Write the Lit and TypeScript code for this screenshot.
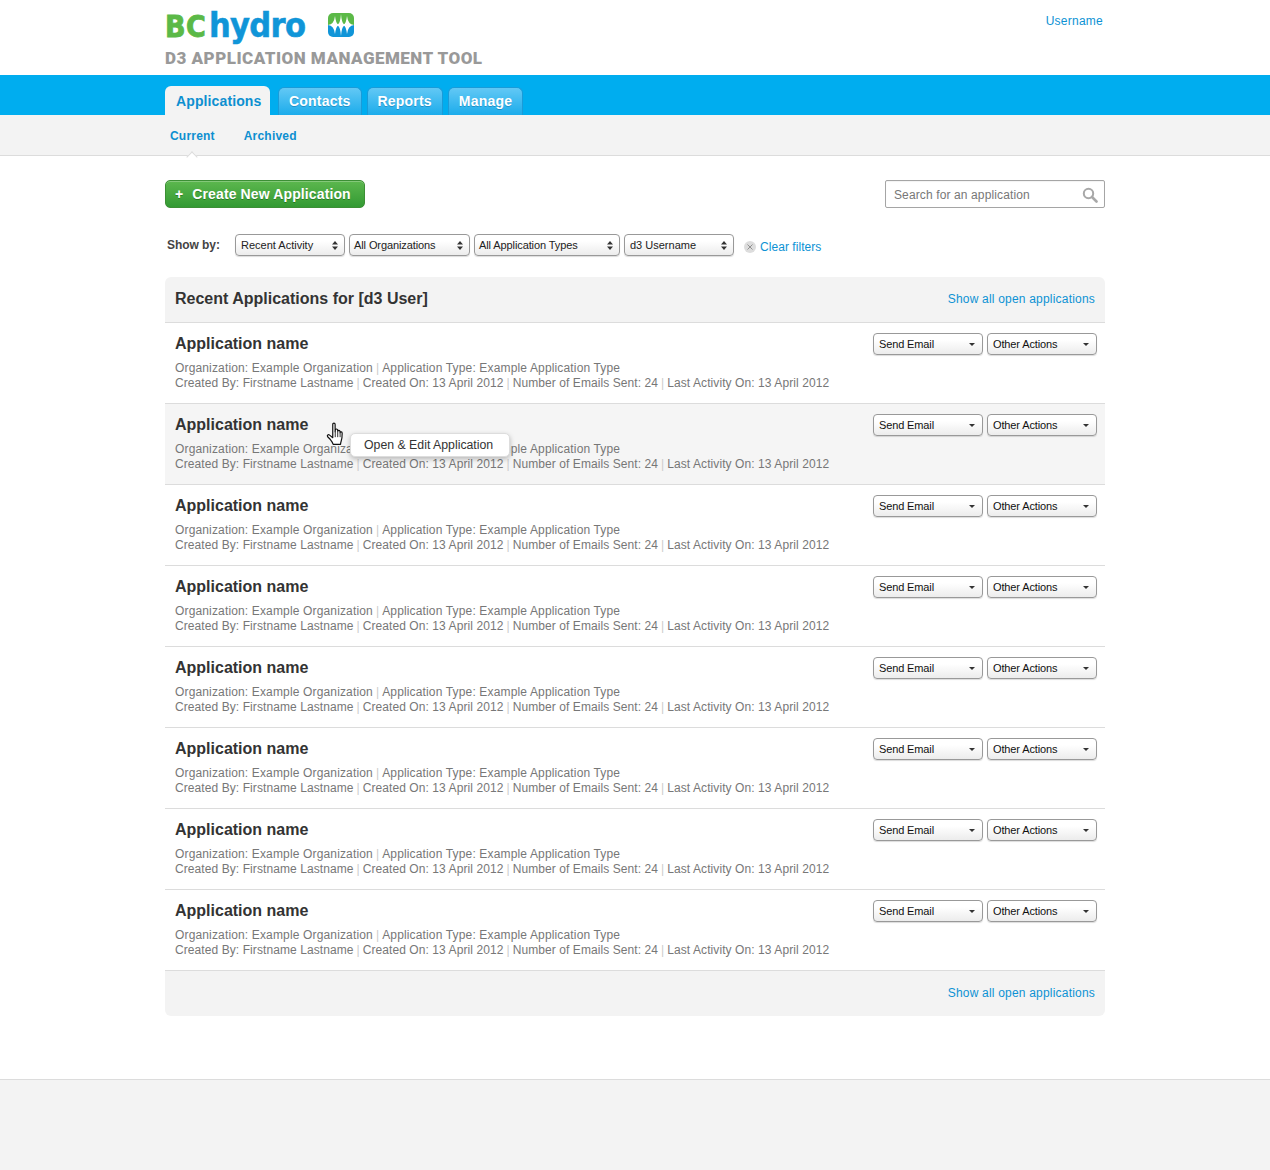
import {LitElement, html, css, svg} from 'lit';
import {customElement} from 'lit/decorators.js';

const TABS = ['Contacts', 'Reports', 'Manage'];
const FILTERS = [
  {label: 'Recent Activity', width: 110, tight: false},
  {label: 'All Organizations', width: 121, tight: true},
  {label: 'All Application Types', width: 146, tight: true},
  {label: 'd3 Username', width: 110, tight: false},
];
const ROWS = [0, 1, 2, 3, 4, 5, 6, 7];

const logoMark = svg`
  <rect x="0" y="0" width="26" height="12" fill="#5bb947"/>
  <rect x="0" y="12" width="26" height="12" fill="#1095d8"/>
  <path d="M0 12 Q6 11.500 7 3 Q8 10.500 10 11.300 Q12.300 10 13 1 Q13.700 10 16 11.300 Q18 10.500 19 3 Q20 11.500 26 12 Q20 12.500 19 21 Q18 13.500 16 12.700 Q13.700 14 13 23 Q12.300 14 10 12.700 Q8 13.500 7 21 Q6 12.500 0 12Z" fill="#fff"/>
`;

@customElement('app-root')
export class AppRoot extends LitElement {
  static styles = css`
    :host {
      display: block;
      min-height: 1170px;
      background: #fff;
      font-family: 'Liberation Sans', Arial, sans-serif;
      color: #333;
    }

    .wrap {
      width: 940px;
      margin-left: 165px;
    }

    .header .wrap {
      height: 75px;
      display: flex;
      justify-content: space-between;
      box-sizing: border-box;
    }

    .logo-line {
      display: flex;
      align-items: flex-start;
      height: 43px;
      padding-top: 7px;
    }

    .logo-text {
      display: flex;
      align-items: baseline;
      height: 38px;
      font-family: 'DejaVu Sans Condensed', 'Liberation Sans', sans-serif;
      font-weight: 700;
      line-height: 36px;
      white-space: nowrap;
    }

    .logo-bc {
      color: #5bb947;
      width: 44px;
      font-size: 30px;
      letter-spacing: 0.5px;
      -webkit-text-stroke: 0.8px currentColor;
    }

    .logo-hydro {
      color: #1095d8;
      width: 119px;
      font-size: 34px;
      letter-spacing: -0.7px;
      -webkit-text-stroke: 0.5px currentColor;
    }

    .logo-mark {
      display: block;
      width: 26px;
      height: 24px;
      margin-top: 6px;
      border-radius: 5px;
    }

    .tool-name {
      font-family: Roboto, 'Liberation Sans', sans-serif;
      font-weight: 900;
      font-size: 17px;
      line-height: 20px;
      letter-spacing: 0.48px;
      color: #999;
      white-space: nowrap;
      margin-top: -2px;
    }

    .username {
      font-size: 12px;
      letter-spacing: 0.25px;
      color: #0d92d4;
      padding: 14px 2px 0 0;
    }

    .tabbar {
      height: 40px;
      background: #00adef;
    }

    .tabbar .wrap {
      display: flex;
      align-items: flex-end;
      height: 40px;
      gap: 5px;
    }

    .tab {
      box-sizing: border-box;
      height: 28px;
      padding: 0 10px;
      line-height: 27px;
      font-size: 14px;
      font-weight: 700;
      letter-spacing: 0.2px;
      color: #fff;
      border: 1px solid #1a9bd8;
      border-bottom: 0;
      border-radius: 6px 6px 0 0;
      background: linear-gradient(#62c8f5, #1caceb);
      text-shadow: 0 1px 0 rgba(0, 80, 130, 0.35);
    }

    .tab.active {
      height: 29px;
      padding: 0 8px 0 11px;
      line-height: 31px;
      width: 105px;
      margin-right: 3px;
      border: 0;
      background: #f3f3f3;
      color: #0d8fd0;
      letter-spacing: 0.12px;
      text-shadow: none;
    }

    .subnav {
      height: 40px;
      background: #f3f3f3;
      border-bottom: 1px solid #dcdcdc;
    }

    .subnav .wrap {
      display: flex;
      gap: 29px;
      padding-left: 5px;
      box-sizing: border-box;
    }

    .subnav a {
      position: relative;
      font-size: 12px;
      font-weight: 700;
      letter-spacing: 0.2px;
      line-height: 42px;
      color: #0d8fd0;
    }

    .subnav a.active::after {
      content: '';
      position: absolute;
      left: 18px;
      bottom: -4px;
      width: 7px;
      height: 7px;
      background: #fff;
      border-top: 1px solid #dcdcdc;
      border-left: 1px solid #dcdcdc;
      transform: rotate(45deg);
    }

    .toolbar {
      display: flex;
      justify-content: space-between;
      padding-top: 24px;
    }

    .create {
      box-sizing: border-box;
      width: 200px;
      height: 28px;
      padding-left: 9px;
      display: flex;
      gap: 9px;
      align-items: center;
      border-radius: 5px;
      border: 1px solid #3c8f35;
      background: linear-gradient(#5cb74e, #339a33);
      box-shadow: inset 0 1px 0 rgba(255, 255, 255, 0.25);
      color: #fff;
      font-size: 14px;
      font-weight: 700;
      letter-spacing: 0.12px;
      text-shadow: 0 1px 0 rgba(0, 60, 0, 0.4);
    }

    .search {
      box-sizing: border-box;
      width: 220px;
      height: 28px;
      padding: 1px 6px 0 8px;
      display: flex;
      align-items: center;
      justify-content: space-between;
      border: 1px solid #a5a5a5;
      border-radius: 2px;
      font-size: 12px;
      letter-spacing: 0.12px;
      color: #777;
      box-shadow: inset 0 1px 1px rgba(0, 0, 0, 0.05);
    }

    .filters {
      display: flex;
      align-items: center;
      margin-top: 26px;
      height: 22px;
    }

    .show-by {
      width: 70px;
      padding-left: 2px;
      box-sizing: border-box;
      font-size: 12px;
      font-weight: 700;
      letter-spacing: -0.05px;
      color: #444;
    }

    .select {
      box-sizing: border-box;
      height: 22px;
      margin-right: 4px;
      padding: 0 6px 0 5px;
      display: flex;
      align-items: center;
      justify-content: space-between;
      border: 1px solid #999;
      border-radius: 4px;
      background: linear-gradient(#fff 30%, #ececec);
      box-shadow: 0 1px 1px rgba(0, 0, 0, 0.14);
      font-size: 11px;
      color: #222;
      white-space: nowrap;
    }

    .select.tight {
      padding-left: 4px;
      letter-spacing: -0.1px;
    }

    .clear {
      display: flex;
      align-items: center;
      margin: 4px 0 0 6px;
      gap: 4px;
      font-size: 12px;
      letter-spacing: 0.05px;
      color: #0d92d4;
    }

    .clear-x {
      width: 12px;
      height: 12px;
      display: block;
    }

    .panel {
      margin-top: 21px;
    }

    .panel-head {
      box-sizing: border-box;
      height: 46px;
      padding: 0 10px 2px;
      display: flex;
      align-items: center;
      justify-content: space-between;
      background: #f3f3f3;
      border-radius: 6px 6px 0 0;
      border-bottom: 1px solid #dcdcdc;
    }

    .panel-head h2 {
      margin: 0;
      font-size: 16px;
      font-weight: 700;
      color: #333;
    }

    .link {
      font-size: 12px;
      letter-spacing: 0.2px;
      color: #0d92d4;
    }

    .row {
      position: relative;
      box-sizing: border-box;
      height: 81px;
      padding: 10px 8px 0 10px;
      display: flex;
      justify-content: space-between;
      border-bottom: 1px solid #dcdcdc;
    }

    .row.hover {
      background: #f5f5f5;
    }

    .row h3 {
      margin: 0 0 7px;
      font-size: 16px;
      line-height: 21px;
      font-weight: 700;
      color: #333;
    }

    .meta {
      font-size: 12px;
      line-height: 15px;
      letter-spacing: 0.08px;
      color: #777;
      white-space: nowrap;
    }

    .meta.first {
      letter-spacing: 0.15px;
    }

    .sep {
      color: #ccc;
      padding: 0 3px;
    }

    .actions {
      display: flex;
      gap: 4px;
    }

    .action {
      box-sizing: border-box;
      width: 110px;
      height: 22px;
      padding: 0 6px 0 5px;
      display: flex;
      align-items: center;
      justify-content: space-between;
      border: 1px solid #999;
      border-radius: 4px;
      background: linear-gradient(#fff 30%, #ececec);
      box-shadow: 0 1px 1px rgba(0, 0, 0, 0.14);
      font-size: 11px;
      letter-spacing: -0.13px;
      color: #111;
    }

    .caret {
      width: 0;
      height: 0;
      margin-right: 1px;
      border-left: 3px solid transparent;
      border-right: 3px solid transparent;
      border-top: 3px solid #333;
    }

    .tooltip {
      position: absolute;
      left: 185px;
      top: 29px;
      box-sizing: border-box;
      width: 160px;
      height: 24px;
      padding-left: 13px;
      line-height: 23px;
      font-size: 12.3px;
      color: #333;
      background: #fff;
      border: 1px solid #ddd;
      border-radius: 5px;
      box-shadow: 0 2px 5px rgba(0, 0, 0, 0.25);
      white-space: nowrap;
    }

    .cursor {
      position: absolute;
      left: 161px;
      top: 18px;
      width: 20px;
      height: 26px;
    }

    .panel-foot {
      box-sizing: border-box;
      height: 45px;
      padding: 0 10px 2px;
      display: flex;
      align-items: center;
      justify-content: flex-end;
      background: #f3f3f3;
      border-radius: 0 0 6px 6px;
    }

    .footer {
      margin-top: 63px;
      height: 91px;
      background: #f3f3f3;
      border-top: 1px solid #dcdcdc;
    }
  `;

  private renderRow(i: number) {
    const hover = i === 1;
    return html`
      <div class="row ${hover ? 'hover' : ''}">
        <div>
          <h3>Application name</h3>
          <div class="meta first">Organization: Example Organization<span class="sep">|</span>Application Type: Example Application Type</div>
          <div class="meta">Created By: Firstname Lastname<span class="sep">|</span>Created On: 13 April 2012<span class="sep">|</span>Number of Emails Sent: 24<span class="sep">|</span>Last Activity On: 13 April 2012</div>
        </div>
        <div class="actions">
          <div class="action">Send Email<span class="caret"></span></div>
          <div class="action">Other Actions<span class="caret"></span></div>
        </div>
        ${hover
          ? html`
              <svg class="cursor" viewBox="0 0 18 24">
                <path d="M6 2.200c0-1.500 2.200-1.500 2.200 0V9l.2-1.600c.2-1.300 2-1.200 2.100.1l.1 1.100c.2-1.200 2-1.100 2.100.2l.1 1c.3-1 1.900-.8 1.900.5 0 3-.2 5.300-.9 7.300-.4 1.200-.6 2-.6 3H6.400c-.4-1.800-1.400-3-2.800-4.700L1.300 13.600c-.9-1.200.6-2.600 1.800-1.500L6 14.500Z" fill="#fff" stroke="#111" stroke-width="1.100" stroke-linejoin="round"/>
                <path d="M8.300 9v5M10.600 9v5M12.800 10v4" stroke="#111" stroke-width="0.8" fill="none"/>
              </svg>
              <div class="tooltip">Open &amp; Edit Application</div>
            `
          : ''}
      </div>
    `;
  }

  render() {
    return html`
      <div class="header">
        <div class="wrap">
          <div>
            <div class="logo-line">
              <div class="logo-text"><span class="logo-bc">BC</span><span class="logo-hydro">hydro</span></div>
              <svg class="logo-mark" viewBox="0 0 26 24">${logoMark}</svg>
            </div>
            <div class="tool-name">D3 APPLICATION MANAGEMENT TOOL</div>
          </div>
          <div class="username">Username</div>
        </div>
      </div>

      <div class="tabbar">
        <div class="wrap">
          <div class="tab active">Applications</div>
          ${TABS.map((t) => html`<div class="tab">${t}</div>`)}
        </div>
      </div>

      <div class="subnav">
        <div class="wrap">
          <a class="active">Current</a>
          <a>Archived</a>
        </div>
      </div>

      <div class="wrap">
        <div class="toolbar">
          <div class="create"><span>+</span><span>Create New Application</span></div>
          <div class="search">
            <span>Search for an application</span>
            <svg width="16" height="16" viewBox="0 0 16 16">
              <circle cx="6.500" cy="6.500" r="4.700" fill="none" stroke="#a8a8a8" stroke-width="2"/>
              <path d="M10 10l4.500 4.500" stroke="#a8a8a8" stroke-width="2.600" stroke-linecap="round"/>
            </svg>
          </div>
        </div>

        <div class="filters">
          <div class="show-by">Show by:</div>
          ${FILTERS.map(
            (f) => html`
              <div class="select ${f.tight ? 'tight' : ''}" style="width:${f.width}px">
                <span>${f.label}</span>
                <svg width="6" height="9" viewBox="0 0 6 9">
                  <path d="M3 0l3 3.500H0ZM3 9L0 5.500h6Z" fill="#333"/>
                </svg>
              </div>
            `,
          )}
          <div class="clear">
            <svg class="clear-x" viewBox="0 0 12 12">
              <circle cx="6" cy="6" r="6" fill="#ddd"/>
              <path d="M3.500 3.500l5 5M8.500 3.500l-5 5" stroke="#888" stroke-width="0.9"/>
            </svg>
            <span>Clear filters</span>
          </div>
        </div>

        <div class="panel">
          <div class="panel-head">
            <h2>Recent Applications for [d3 User]</h2>
            <span class="link">Show all open applications</span>
          </div>
          ${ROWS.map((i) => this.renderRow(i))}
          <div class="panel-foot"><span class="link">Show all open applications</span></div>
        </div>
      </div>

      <div class="footer"></div>
    `;
  }
}
